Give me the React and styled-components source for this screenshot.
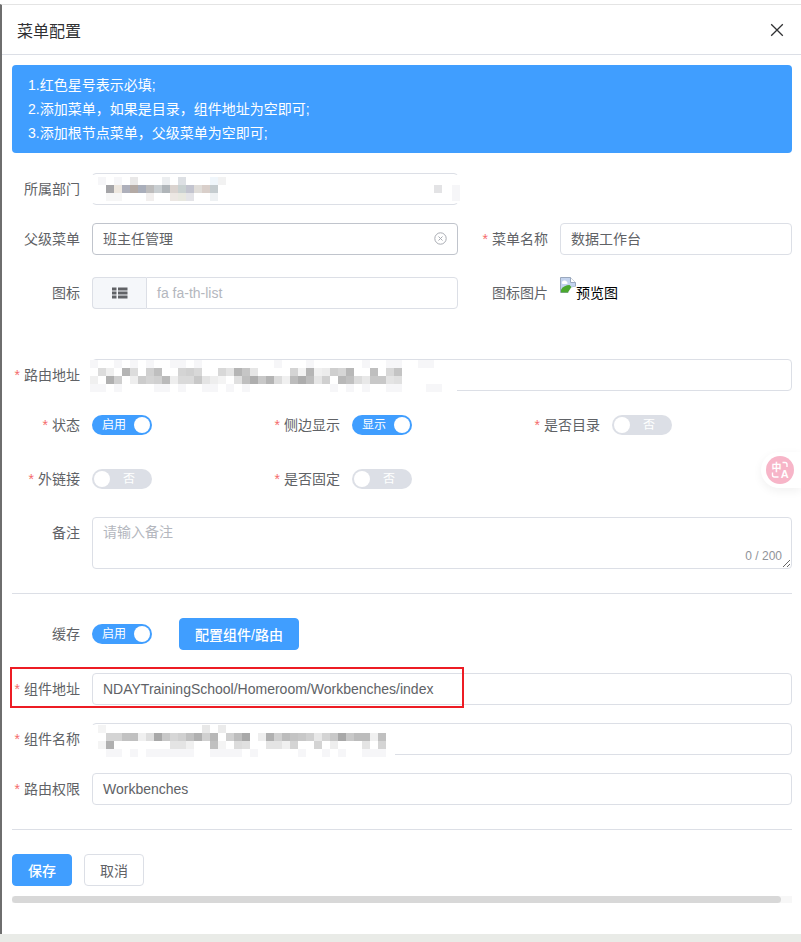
import React from 'react';
import styled, { createGlobalStyle } from 'styled-components';

const Global = createGlobalStyle`
  html, body { margin: 0; padding: 0; background: #fff; }
  body { font-family: "Liberation Sans", "Noto Sans CJK SC", sans-serif; font-size: 14px; color: #606266; }
  * { box-sizing: border-box; }
`;

const Page = styled.div`
  position: relative;
  width: 801px;
  height: 942px;
  overflow: hidden;
  background: #fff;
  display: flex;
  flex-direction: column;
  padding-top: 4px;
`;
const Dialog = styled.div`
  flex: 1;
  min-height: 0;
  border-top: 1px solid #e4e4e4;
  border-left: 2px solid #6e6e6e;
  background: #fff;
`;
const BottomBand = styled.div`
  height: 8px;
  background: #e9ebe7;
`;
const Header = styled.header`
  height: 50px;
  border-bottom: 1px solid #dcdfe6;
  padding: 0 17px 0 15px;
  display: flex;
  align-items: center;
  justify-content: space-between;
`;
const Title = styled.h2`
  margin: 0;
  font-size: 16px;
  font-weight: 400;
  color: #303133;
`;
const Body = styled.div`
  padding: 10px 9px 0 10px;
`;
const Alert = styled.div`
  height: 88px;
  padding: 8px 16px;
  background: #409eff;
  border-radius: 4px;
  color: #fff;
  font-size: 14px;
  line-height: 24px;
`;
const Row = styled.div`
  position: relative;
  margin-top: ${p => p.$top}px;
  display: grid;
  grid-template-columns: ${p => p.$cols || '1fr'};
`;
const Cell = styled.div`
  display: flex;
  align-items: ${p => p.$align || 'center'};
  gap: 12px;
  min-height: 32px;
`;
const Label = styled.label`
  flex: none;
  width: ${p => p.$w || 68}px;
  text-align: right;
  line-height: 32px;
  font-size: 14px;
  color: #606266;
  white-space: nowrap;
`;
const Star = styled.span`
  color: #f56c6c;
  margin-right: 4px;
`;
const Field = styled.div`
  position: relative;
  flex: 1;
  min-width: 0;
  height: 32px;
  display: flex;
  align-items: center;
  padding: 0 10px ${p => (p.$cjk ? 2 : 0)}px;
  background: #fff;
  border: 1px solid ${p => (p.$strong ? '#c0c4cc' : '#dcdfe6')};
  border-radius: 4px;
  font-size: 14px;
  color: #606266;
  justify-content: space-between;
`;
const Placeholder = styled.span`
  color: #b4b7be;
`;
const Prepend = styled.div`
  flex: none;
  width: 54px;
  height: 32px;
  display: flex;
  align-items: center;
  justify-content: center;
  background: #f5f7fa;
  border: 1px solid #dcdfe6;
  border-right: 0;
  border-radius: 4px 0 0 4px;
`;
const Appended = styled(Field)`
  border-radius: 0 4px 4px 0;
`;
const InputGroup = styled.div`
  flex: 1;
  display: flex;
`;
const PreviewBox = styled.div`
  flex: 1;
  display: flex;
  align-items: flex-start;
  height: 32px;
`;
const PreviewAlt = styled.span`
  font-size: 14px;
  line-height: 16px;
  margin-top: 8px;
  color: #000;
`;
const Track = styled.div`
  flex: none;
  width: 60px;
  height: 20px;
  border-radius: 10px;
  padding: 2px;
  display: flex;
  align-items: center;
  flex-direction: ${p => (p.$on ? 'row' : 'row-reverse')};
  background: ${p => (p.$on ? '#409eff' : '#dcdfe6')};
  color: #fff;
  font-size: 12px;
`;
const TrackText = styled.span`
  flex: 1;
  text-align: center;
  line-height: 16px;
  padding-right: ${p => (p.$on ? 0 : 2)}px;
`;
const Knob = styled.span`
  flex: none;
  width: 16px;
  height: 16px;
  border-radius: 50%;
  background: #fff;
`;
const TextArea = styled.div`
  position: relative;
  flex: 1;
  height: 52px;
  padding: 4px 10px;
  line-height: 21px;
  border: 1px solid #dcdfe6;
  border-radius: 4px;
  color: #b4b7be;
  font-size: 14px;
  overflow: auto;
  resize: vertical;
`;
const Counter = styled.span`
  position: absolute;
  right: 9px;
  bottom: 5px;
  line-height: 14px;
  font-size: 12px;
  color: #909399;
`;
const Divider = styled.hr`
  margin: ${p => p.$top}px 0 0;
  height: 1px;
  border: 0;
  background: #dcdfe6;
`;
const Btn = styled.button`
  flex: none;
  height: 32px;
  min-width: 60px;
  padding: 0 15px;
  border-radius: 4px;
  font: inherit;
  font-size: 14px;
  font-weight: ${p => (p.$primary ? 500 : 400)};
  color: ${p => (p.$primary ? '#fff' : '#606266')};
  background: ${p => (p.$primary ? '#409eff' : '#fff')};
  border: 1px solid ${p => (p.$primary ? '#409eff' : '#dcdfe6')};
`;
const ConfigBtn = styled(Btn)`
  margin-left: 15px;
  width: 120px;
`;
const Actions = styled.div`
  margin-top: 24px;
  display: flex;
  gap: 12px;
`;
const ScrollTrack = styled.div`
  margin-top: 10px;
  height: 7px;
  background: #f7f7f7;
`;
const ScrollThumb = styled.div`
  width: 769px;
  height: 7px;
  background: #d8d8d8;
  border-radius: 4px;
`;
const Annotation = styled.div`
  position: absolute;
  left: -2px;
  top: -6px;
  width: 454px;
  height: 41px;
  border: 2px solid #ed1c24;
  pointer-events: none;
`;
const Float = styled.div`
  position: absolute;
  left: 761px;
  top: 452px;
  width: 40px;
  height: 36px;
  padding: 4px 0 0 5px;
  background: #fff;
  border-radius: 18px 0 0 18px;
  box-shadow: 0 3px 10px rgba(0, 0, 0, 0.06);
`;
const MosaicSvg = styled.svg`
  position: absolute;
  left: -1px;
  top: -1px;
  overflow: visible;
  pointer-events: none;
  shape-rendering: crispEdges;
`;

const Mosaic = ({ rows, covers = [] }) => (
  <MosaicSvg width="1" height="1" aria-hidden="true">
    {covers.map(([x, y, w, h], i) => <rect key={i} x={x} y={y} width={w} height={h} fill="#fff" />)}
    {rows.flatMap(([y, x0, cells], r) =>
      cells.split(' ').map((c, i) => (c === '-' ? null : (
        <rect key={`${r}-${i}`} x={x0 + i * 8} y={y} width="8" height="8" fill={`#${c.length === 2 ? c + c + c : c}`} />
      )))
    )}
  </MosaicSvg>
);
const sparse = (y, xs, color = 'f6f6f8') => xs.map(x => [y, x, color]);

const deptRows = [
  [4, 38, 'e9e8e8 - - - eceef0 - dde0e4 - - - f0f6fb f2f2f2'],
  [12, 14, 'a5a5a8 ede7df aeb0bb b3aaa5 a9aeba bdbcbc c9ced1 b0b5b9 dad3cf c9d1d1 c3c4cf e0ddd9 d9cfca c5cccf'],
  [12, 342, 'e3e3e5'],
  [20, 14, 'f6f6f6 f6f6f6 - - - f2efee - - ece7e3 e8e8e0 e4e4e8 - - eef1f3'],
  ...sparse(4, [6, 22]),
  ...sparse(12, [360]),
  ...sparse(20, [360]),
];
const routeRows = [
  ...sparse(1, [-2, 22, 38, 54, 78, 86, 102, 182, 214, 270, 294, 302, 326, 334]),
  [9, 6, 'dc ef - b5 dc - d0 bf - - d4 d0 d8 - - d8 e4 b5 c6 e6 - - - - d4 f3 b5 f0 ec cf d6 b8 - - bf - d8 c4'],
  [17, -2, 'f0 - b0 cf - ee cc d4 d0 ba ee da da c8 e4 ee f4 - e0 bf ae c8 b4 dc f0 bc ad bd e6 d0 - b8 c0 dc e8 c8 c8 e4 e0'],
  ...sparse(25, [-2, 6, 22, 62, 70, 86, 110, 118, 134, 150, 238, 254, 270, 294, 302, 334, 342]),
];
const nameRows = [
  ...sparse(2, [6], 'f4f4f4'),
  [2, 110, 'e8 - eb'],
  [10, 14, 'd4 d4 c2 c0 f0 de a8 c8 d6 d0 c0 b0 d0 b8 - d0 bd a8 - ee b0 d0 bc c4 c8 d0 e8 d4 c8 a8 c8 bc bc f0 c0'],
  [18, 14, 'b0 - - - - - - - e4 e4 f0 - - c0 f4 - dc e0 - - e4 e4 f0 d4 - - d4 - ee - - - e4 - d4'],
  ...sparse(18, [6], 'f4f4f4'),
  ...sparse(26, [14, 22, 38, 54, 62, 70, 78, 86, 94, 118, 126, 134, 142, 158, 206, 230, 246, 270, 278, 286]),
];

const ThListIcon = () => (
  <svg width="16" height="12" viewBox="0 0 16 12" fill="#606266" aria-hidden="true">
    <path d="M0 0.5h4.5v3H0zM6 0.5h9.5v3H6zM0 4.5h4.5v3H0zM6 4.5h9.5v3H6zM0 8.5h4.5v3H0zM6 8.5h9.5v3H6z" />
  </svg>
);
const CloseIcon = () => (
  <svg width="14" height="14" viewBox="0 0 14 14" fill="none" stroke="#303133" strokeWidth="1.3" aria-hidden="true">
    <path d="M1.2 1.2l11.6 11.6M12.8 1.2L1.2 12.8" />
  </svg>
);
const ClearIcon = () => (
  <svg width="13" height="13" viewBox="0 0 13 13" fill="none" stroke="#a8abb2" strokeWidth="1" aria-hidden="true">
    <circle cx="6.5" cy="6.5" r="5.7" />
    <path d="M4.5 4.5l4 4M8.5 4.5l-4 4" />
  </svg>
);
const BrokenImage = () => (
  <svg width="16" height="16" viewBox="0 0 16 16" aria-hidden="true">
    <path d="M0.5 0.5h10l5 5v4l-4 1-3 5h-8z" fill="#c3d3ee" stroke="#9aa8bd" strokeWidth="1" />
    <path d="M10.5 0.5v5h5" fill="#fff" stroke="#9aa8bd" strokeWidth="1" />
    <path d="M2 5c1-2 4-2 5 0 1 1 1 2-1 2H3C2 7 1.5 6 2 5z" fill="#fff" />
    <path d="M1 15.5V12.5c2-3 5-4.5 8.5-4.5l2 2-3.5 5.5z" fill="#4ba82e" />
    <path d="M8 15.8l3.2-5.3 4.6-1V16z" fill="#fff" />
  </svg>
);
const TranslateBadge = () => (
  <svg width="28" height="28" viewBox="0 0 28 28" aria-hidden="true">
    <circle cx="14" cy="14" r="14" fill="#f7b5c8" />
    <text x="5.5" y="14.5" fontSize="10" fontWeight="700" fill="#fff" fontFamily='"Noto Sans CJK SC", sans-serif'>中</text>
    <text x="14.8" y="21.7" fontSize="11" fontWeight="700" fill="#fff" fontFamily='"Liberation Sans", sans-serif'>A</text>
    <path d="M16.5 6.5h2.5a2 2 0 0 1 2 2V11M12.5 21H8.5a2 2 0 0 1-2-2V16.5" fill="none" stroke="#fff" strokeWidth="1.4" />
  </svg>
);

const Switch = ({ on, text }) => (
  <Track $on={on}>
    <TrackText $on={on}>{text}</TrackText>
    <Knob />
  </Track>
);
const FormLabel = ({ req, w, children }) => (
  <Label $w={w}>{req && <Star>*</Star>}{children}</Label>
);
const SwitchCell = ({ label, on, text }) => (
  <Cell>
    <FormLabel req>{label}</FormLabel>
    <Switch on={on} text={text} />
  </Cell>
);

export default function App() {
  return (
    <Page>
      <Global />
      <Dialog>
        <Header>
          <Title>菜单配置</Title>
          <CloseIcon />
        </Header>
        <Body>
          <Alert>
            <div>1.红色星号表示必填;</div>
            <div>2.添加菜单，如果是目录，组件地址为空即可;</div>
            <div>3.添加根节点菜单，父级菜单为空即可;</div>
          </Alert>

          <Row $top={20} $cols="446px">
            <Cell>
              <FormLabel>所属部门</FormLabel>
              <Field>
                <Mosaic rows={deptRows} covers={[[0, 2, 3, 28], [363, 2, 4, 28]]} />
              </Field>
            </Cell>
          </Row>

          <Row $top={18} $cols="446px 1fr">
            <Cell>
              <FormLabel>父级菜单</FormLabel>
              <Field $strong $cjk>班主任管理<ClearIcon /></Field>
            </Cell>
            <Cell>
              <FormLabel req w={90}>菜单名称</FormLabel>
              <Field $cjk>数据工作台</Field>
            </Cell>
          </Row>

          <Row $top={22} $cols="446px 1fr">
            <Cell>
              <FormLabel>图标</FormLabel>
              <InputGroup>
                <Prepend><ThListIcon /></Prepend>
                <Appended><Placeholder>fa fa-th-list</Placeholder></Appended>
              </InputGroup>
            </Cell>
            <Cell>
              <FormLabel w={90}>图标图片</FormLabel>
              <PreviewBox>
                <BrokenImage />
                <PreviewAlt>预览图</PreviewAlt>
              </PreviewBox>
            </Cell>
          </Row>

          <Row $top={50}>
            <Cell>
              <FormLabel req>路由地址</FormLabel>
              <Field>
                <Mosaic rows={routeRows} covers={[[-1, 2, 4, 30], [0, 29, 365, 5]]} />
              </Field>
            </Cell>
          </Row>

          <Row $top={18} $cols="260px 260px 260px">
            <SwitchCell label="状态" on text="启用" />
            <SwitchCell label="侧边显示" on text="显示" />
            <SwitchCell label="是否目录" text="否" />
          </Row>

          <Row $top={22} $cols="260px 260px 260px">
            <SwitchCell label="外链接" text="否" />
            <SwitchCell label="是否固定" text="否" />
          </Row>

          <Row $top={22}>
            <Cell $align="flex-start">
              <FormLabel>备注</FormLabel>
              <TextArea>
                请输入备注
                <Counter>0 / 200</Counter>
              </TextArea>
            </Cell>
          </Row>

          <Divider $top={24} />

          <Row $top={24}>
            <Cell>
              <FormLabel>缓存</FormLabel>
              <Switch on text="启用" />
              <ConfigBtn $primary>配置组件/路由</ConfigBtn>
            </Cell>
          </Row>

          <Row $top={23}>
            <Cell>
              <FormLabel req>组件地址</FormLabel>
              <Field>NDAYTrainingSchool/Homeroom/Workbenches/index</Field>
            </Cell>
            <Annotation />
          </Row>

          <Row $top={18}>
            <Cell>
              <FormLabel req>组件名称</FormLabel>
              <Field>
                <Mosaic rows={nameRows} covers={[[-1, 2, 4, 30], [0, 29, 303, 5]]} />
              </Field>
            </Cell>
          </Row>

          <Row $top={18}>
            <Cell>
              <FormLabel req>路由权限</FormLabel>
              <Field>Workbenches</Field>
            </Cell>
          </Row>

          <Divider $top={24} />

          <Actions>
            <Btn $primary>保存</Btn>
            <Btn>取消</Btn>
          </Actions>
          <ScrollTrack><ScrollThumb /></ScrollTrack>
        </Body>
      </Dialog>
      <BottomBand />
      <Float><TranslateBadge /></Float>
    </Page>
  );
}
